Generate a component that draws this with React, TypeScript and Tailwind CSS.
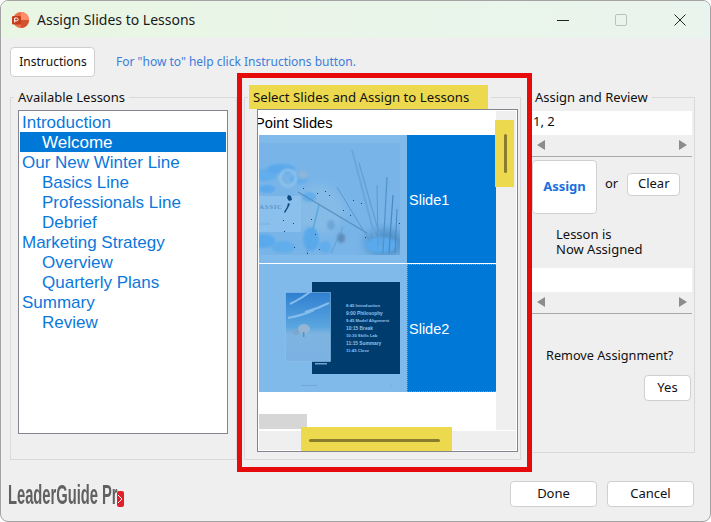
import React from "react";

const ui = "font-['Noto_Sans',sans-serif]";
const arial = "font-['Liberation_Sans',Arial,sans-serif]";
const btn = "bg-white border border-[#d0d0d0] rounded-[4px] text-[13px] text-[#111] flex items-center justify-center shrink-0";

function Arrows() {
  return (
    <div className="h-[20px] flex items-center justify-between px-[5px] bg-[#efefef]">
      <svg width="8" height="10" viewBox="0 0 8 10"><path d="M8 0V10L0 5Z" fill="#8c8c8c" /></svg>
      <svg width="8" height="10" viewBox="0 0 8 10"><path d="M0 0V10L8 5Z" fill="#8c8c8c" /></svg>
    </div>
  );
}

function PptIcon() {
  return (
    <svg width="18" height="18" viewBox="0 0 18 18" className="shrink-0">
      <circle cx="10" cy="9" r="8" fill="#ed6c47" />
      <path d="M10 1a8 8 0 0 1 8 8h-8Z" fill="#ff8f6b" />
      <path d="M10 17a8 8 0 0 0 8-8h-8Z" fill="#d35230" />
      <rect x="1" y="5" width="9" height="8.5" rx="1.2" fill="#c43e1c" />
      <path d="M3.7 11.5V7h2a1.4 1.4 0 0 1 0 2.9h-2" fill="none" stroke="#fff" strokeWidth="1" />
    </svg>
  );
}

function Slide1Thumb() {
  const blades: [string, string, number][] = [
    ["M39 57 L108 98", "#5a90bf", 1.4],
    ["M93 15 L116 102", "#6ba6d8", 2],
    ["M100 28 L124 112", "#62a0d4", 1.3],
    ["M78 52 L112 108", "#5b9ad0", 1],
    ["M128 42 L124 118", "#4f92c8", 1.2],
    ["M134 60 L130 118", "#4888c0", 1.2],
    ["M118 50 L119 112", "#5a9ad0", 1],
    ["M60 70 L48 118", "#5ba8e0", 1.6],
    ["M84 92 L72 118", "#5ba0d4", 1],
    ["M138 74 L136 118", "#4888c0", 1],
  ];
  const dots = [[44, 53], [66, 56], [70, 60], [84, 75], [94, 65], [102, 68], [58, 58], [34, 88], [52, 84], [91, 80], [140, 88], [106, 102], [56, 99], [60, 114], [35, 112], [24, 85], [25, 96], [48, 118]];
  const mottles = [[6, 40, 12, 6], [22, 34, 14, 5], [40, 44, 9, 5], [8, 54, 8, 4], [50, 62, 7, 5], [4, 106, 12, 7], [24, 112, 12, 6], [52, 104, 8, 12], [66, 112, 6, 6], [122, 110, 16, 8]];
  return (
    <svg width="148" height="128" viewBox="0 0 148 128" className="block shrink-0">
      <defs>
        <filter id="soft" x="-20%" y="-20%" width="140%" height="140%"><feGaussianBlur stdDeviation="1.2" /></filter>
        <filter id="softer" x="-20%" y="-20%" width="140%" height="140%"><feGaussianBlur stdDeviation="5" /></filter>
        <clipPath id="pic"><rect x="0" y="8" width="141" height="112" /></clipPath>
      </defs>
      <rect width="148" height="128" fill="#80baeb" />
      <g clipPath="url(#pic)">
        <rect x="0" y="8" width="141" height="112" fill="#78b4e8" />
        <ellipse cx="60" cy="75" rx="25" ry="25" fill="#85bbe6" filter="url(#softer)" />
        <ellipse cx="126" cy="108" rx="20" ry="14" fill="#4f92c8" filter="url(#softer)" />
        <g filter="url(#soft)">
          {mottles.map(([x, y, rx, ry], i) => (
            <ellipse key={i} cx={x} cy={y} rx={rx} ry={ry} fill={i % 2 ? "#5aa9ec" : "#62adeb"} />
          ))}
          <circle cx="29" cy="43" r="8" fill="none" stroke="#90c4ea" strokeWidth="2.5" />
          <ellipse cx="44" cy="40" rx="5" ry="4" fill="#8db6d8" />
          <ellipse cx="82" cy="103" rx="4" ry="5" fill="#5f8db8" />
          <ellipse cx="72" cy="90" rx="4" ry="5" fill="#6ea6d8" />
        </g>
        {blades.map(([d, c, w], i) => (
          <path key={i} d={d} stroke={c} strokeWidth={w} fill="none" />
        ))}
      </g>
      <rect x="0" y="61" width="42" height="36" fill="#8bc0ed" />
      <text x="0" y="74" fontSize="7" fontWeight="700" fontFamily="Liberation Serif, serif" fill="#5f93c4" letterSpacing="0.6">ASSIC</text>
      <text x="0" y="90" fontSize="3" fontFamily="Liberation Sans, sans-serif" fill="#78a8d4">by Darla</text>
      <path d="M29 60l3 1 1 4-3 1-2-3ZM29 68l-1 4-3 5 1 1 3-5 2-4Z" fill="#0d4a80" />
      {dots.map(([x, y], i) => <rect key={i} x={x} y={y} width="1" height="1" fill="#0d4a80" />)}
    </svg>
  );
}

function Slide2Thumb() {
  const rows: [string, number, number][] = [
    ["8:45 Introduction", 4.2, 43], ["9:00 Philosophy", 4.8, 51], ["9:45 Model Alignment", 4.2, 58],
    ["10:15 Break", 4.8, 66], ["10:30 Skills Lab", 4.2, 73], ["11:15 Summary", 4.8, 81], ["11:45 Close", 4.2, 88],
  ];
  return (
    <svg width="148" height="128" viewBox="0 0 148 128" className="block shrink-0">
      <defs>
        <linearGradient id="sky" x1="0" y1="0" x2="0" y2="1">
          <stop offset="0" stopColor="#2f7fd0" />
          <stop offset="0.5" stopColor="#5aa6e0" />
          <stop offset="0.6" stopColor="#7eb4e0" />
          <stop offset="1" stopColor="#7ab2e4" />
        </linearGradient>
      </defs>
      <rect width="148" height="128" fill="#80baeb" />
      <rect x="53" y="18" width="88" height="92" fill="#003c6e" />
      <rect x="56" y="99" width="12" height="1.5" fill="#6ea4d4" />
      <rect x="26.5" y="28.5" width="45" height="69" fill="url(#sky)" stroke="#8fc1ec" strokeWidth="0.6" />
      <path d="M31 40q12-6 20-12M46 48q12-3 24-9M29 54q16-3 26-8" stroke="#85bdec" strokeWidth="2" fill="none" />
      <ellipse cx="45" cy="65" rx="6" ry="5" fill="#94b6d6" />
      <ellipse cx="37" cy="68" rx="3" ry="3" fill="#7ea6cc" />
      <rect x="44" y="68" width="1.4" height="5" fill="#5d8cb8" />
      {rows.map(([t, s, y]) => (
        <text key={t} x="87" y={y} fontSize={s} fontWeight="700" fontFamily="Liberation Sans, sans-serif" fill="#8cc2ee">{t}</text>
      ))}
      <rect x="42" y="121" width="16" height="1" fill="#72a8d8" />
      <rect x="132" y="121" width="1" height="1" fill="#72a8d8" />
    </svg>
  );
}

export default function App() {
  const lessons: [string, boolean, boolean][] = [
    ["Introduction", false, false], ["Welcome", true, true], ["Our New Winter Line", false, false],
    ["Basics Line", true, false], ["Professionals Line", true, false], ["Debrief", true, false],
    ["Marketing Strategy", false, false], ["Overview", true, false], ["Quarterly Plans", true, false],
    ["Summary", false, false], ["Review", true, false],
  ];
  const fieldset = "border border-[#d9d9d9] shrink-0 min-w-0 p-0";
  const legend = "ml-[3px] px-[4px] h-[18px] leading-[18px] text-[13px] text-[#111]";

  return (
    <div className={`${ui} relative w-[711px] h-[522px] box-border border border-[#a3a3a3] rounded-[8px] bg-[#efefef] overflow-hidden flex flex-col`}>
      <div className="h-[37px] shrink-0 flex items-center bg-gradient-to-r from-[#e9f6e3] to-[#eaf4ee]">
        <div className="ml-[10px] mr-[8px] flex"><PptIcon /></div>
        <div className="text-[14px] text-[#1a1a1a] leading-none">Assign Slides to Lessons</div>
        <div className="ml-auto flex items-center">
          <svg width="12" height="12" viewBox="0 0 12 12" className="mr-[46px]"><path d="M0 6.5H12" stroke="#222" strokeWidth="1" /></svg>
          <svg width="12" height="12" viewBox="0 0 12 12" className="mr-[47px]"><rect x="0.5" y="0.5" width="11" height="11" rx="1.5" fill="none" stroke="#b9c2bb" /></svg>
          <svg width="12" height="12" viewBox="0 0 12 12" className="mr-[24px]"><path d="M0.5 0.5L11.5 11.5M11.5 0.5L0.5 11.5" stroke="#222" strokeWidth="1" /></svg>
        </div>
      </div>

      <div className="flex items-center h-[30px] mt-[9px] ml-[9px] shrink-0">
        <div className={`${btn} w-[85px] h-[30px] pl-[1px] !text-[12px]`}>Instructions</div>
        <div className="ml-[21px] text-[12px] text-[#3b7ddb]">For "how to" help click Instructions button.</div>
      </div>

      <div className="flex items-start mt-[11px] ml-[9px] shrink-0">
        <fieldset className={`${fieldset} w-[227px] h-[372px]`}>
          <legend className={`${legend} text-[13.4px]`}>Available Lessons</legend>
          <div className={`${arial} mt-[4px] ml-[7px] w-[210px] h-[324px] box-border border border-[#85858f] bg-white p-[1px]`}>
            {lessons.map(([t, indent, sel]) => (
              <div key={t} className={`h-[20px] leading-[22px] text-[17px] whitespace-nowrap ${indent ? "pl-[22px]" : "pl-[2px]"} ${sel ? "bg-[#0078d7] text-white" : "text-[#0b78dc]"}`}>{t}</div>
            ))}
          </div>
        </fieldset>

        <fieldset className={`${fieldset} ml-[7px] w-[277px] h-[372px]`}>
          <legend className="ml-[3px] w-[243px] h-[18px]" />
          <div className="relative mt-[3px] ml-[12px] w-[261px] h-[343px] box-border border border-[#85858f] bg-white flex flex-col">
            <div className="flex h-[320px]">
              <div className={`${arial} w-[238px] bg-white overflow-hidden`}>
                <div className="h-[25px] pt-[4px] -ml-[3px] text-[14.7px] leading-[18px] text-black whitespace-nowrap">Point Slides</div>
                {[1, 2].map((n) => (
                  <div key={n} className="flex h-[128px] mb-[1px] ml-[1px]">
                    {n === 1 ? <Slide1Thumb /> : <Slide2Thumb />}
                    <div className={`flex-1 bg-[#0078d7] flex items-center pt-[3px] text-[14.5px] text-white ${n === 2 ? "pl-[1px] border-t border-l border-b border-dotted border-[#f07818]" : "pl-[2px]"}`}>Slide{n}</div>
                  </div>
                ))}
              </div>
              <div className="flex-1 bg-[#efefef] mt-[1px] mr-[1px]" />
            </div>
            <div className="h-[20px] bg-[#efefef] mx-[1px] border-t border-white" />
            {/* dragged header ghost, over the list */}
            <div className="absolute left-[1px] top-[304px] w-[48px] h-[15px] bg-[#d6d6d6]" />
            {/* yellow call-outs over the scroll bars */}
            <div className="absolute left-[237px] top-[10px] w-[19px] h-[67px] bg-[#ecd94e] flex justify-center items-center">
              <div className="w-[3px] h-[39px] ml-[1px] rounded-full bg-[#8a7c2e]" />
            </div>
            <div className="absolute left-[43px] top-[317px] w-[151px] h-[24px] bg-[#ecd94e] flex items-center justify-center pt-[2px]">
              <div className="w-[131px] h-[3px] mr-[4px] rounded-full bg-[#8a7c2e]" />
            </div>
          </div>
        </fieldset>

        <fieldset className={`${fieldset} ml-[6px] w-[168px] h-[365px]`}>
          <legend className={legend}>Assign and Review</legend>
          <div className="mt-[5px] ml-[4px] mr-[2px]">
            <div className="h-[24px] bg-white pl-[1px] text-[13px] leading-[20px] text-[#111]">1, 2</div>
            <Arrows />
            <div className="h-px bg-[#a8a8a8] mt-[1px]" />
            <div className="flex items-center mt-[3px]">
              <div className={`${btn} w-[65px] h-[54px] font-bold !text-[#1b6fdc]`}>Assign</div>
              <div className="ml-[8px] text-[13px] text-[#111] -mt-[6px]">or</div>
              <div className={`${btn} ml-[9px] w-[53px] h-[23px] -mt-[6px]`}>Clear</div>
            </div>
            <div className="mt-[13px] ml-[24px] text-[13px] leading-[15px] text-[#111]">Lesson is<br />Now Assigned</div>
            <div className="h-[24px] bg-white mt-[11px]" />
            <Arrows />
            <div className="h-px bg-[#a8a8a8] mt-[1px]" />
            <div className="mt-[32px] ml-[14px] text-[12.7px] leading-[18px] text-[#111]">Remove Assignment?</div>
            <div className="flex justify-end mt-[11px] mr-[1px]">
              <div className={`${btn} w-[47px] h-[26px]`}>Yes</div>
            </div>
          </div>
        </fieldset>
      </div>

      <div className="flex items-center mt-auto mb-[14px] ml-[7px] h-[26px] shrink-0">
        <div className="w-[117px] h-[26px] flex items-center pt-[3px]">
          <div className={`${arial} origin-left scale-x-[0.545] font-bold text-[27px] leading-none text-[#616161] whitespace-nowrap`}>LeaderGuide Pr</div>
        </div>
        <div className="ml-auto flex gap-[10px] mr-[16px]">
          <div className={`${btn} w-[87px] h-[26px]`}>Done</div>
          <div className={`${btn} w-[87px] h-[26px]`}>Cancel</div>
        </div>
      </div>

      {/* logo chevron, over the logo text's end */}
      <svg width="7" height="16" viewBox="0 0 7 16" className="absolute left-[116px] top-[490px]">
        <rect width="7" height="16" rx="2" fill="#e0202a" />
        <path d="M1 4L5 8L1 12" fill="none" stroke="#fff" strokeWidth="1" />
      </svg>

      {/* red annotation frame, over the dialog */}
      <div className="absolute left-[236px] top-[72px] w-[295px] h-[399px] border-[5px] border-[#e60a0a] pointer-events-none" />
      {/* yellow label highlight, over the group's border */}
      <div className="absolute left-[248px] top-[84px] w-[239px] h-[24px] bg-[#ecd94e] pl-[4px] text-[13.2px] leading-[24px] text-[#111] whitespace-nowrap">Select Slides and Assign to Lessons</div>
    </div>
  );
}
